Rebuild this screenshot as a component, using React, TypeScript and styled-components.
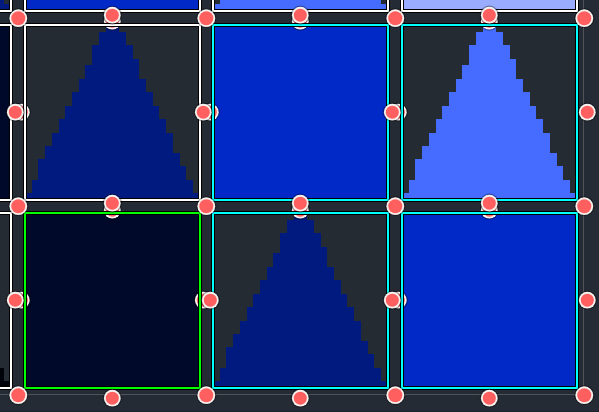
import React from "react";
import styled, { createGlobalStyle } from "styled-components";

const GlobalStyle = createGlobalStyle`
  body {
    margin: 0;
    background: #252b35;
    font-family: "Liberation Sans", sans-serif;
  }
`;

type Shape = "solid" | "cone";
type Side = "top" | "right" | "bottom" | "left";
type Corner = "topLeft" | "topRight" | "bottomLeft" | "bottomRight";
type Anchor = Side | Corner;

interface TileData {
  shape: Shape;
  color: string;
  outline: string;
  active?: boolean;
}

const WHITE = "#ffffff";
const CYAN = "#00ffff";
const GREEN = "#00ff00";

const ROWS: TileData[][] = [
  [
    { shape: "cone", color: "#001a80", outline: WHITE },
    { shape: "solid", color: "#0029c7", outline: WHITE },
    { shape: "cone", color: "#466cff", outline: WHITE },
    { shape: "solid", color: "#99acff", outline: WHITE },
  ],
  [
    { shape: "solid", color: "#000929", outline: WHITE },
    { shape: "cone", color: "#001a80", outline: WHITE },
    { shape: "solid", color: "#0029c7", outline: CYAN },
    { shape: "cone", color: "#466cff", outline: CYAN },
  ],
  [
    { shape: "cone", color: "#00020a", outline: WHITE },
    { shape: "solid", color: "#000929", outline: GREEN, active: true },
    { shape: "cone", color: "#001a80", outline: CYAN },
    { shape: "solid", color: "#0029c7", outline: CYAN },
  ],
];

/* Stepped slopes of the cone, as [x, y at which the step starts]. */
const LEFT_STEPS = [
  [83, 0], [76, 9], [69, 22], [62, 42], [56, 56], [49, 69], [42, 83],
  [36, 96], [29, 110], [22, 123], [15, 136], [9, 157], [4, 170],
];
const RIGHT_STEPS = [
  [96, 0], [103, 9], [110, 22], [116, 36], [123, 56], [130, 69], [136, 83],
  [143, 96], [150, 110], [157, 130], [163, 143], [170, 157], [176, 170],
];

const CONE_PATH =
  "M83 0 H96 " +
  RIGHT_STEPS.slice(1).map(([x, y]) => `V${y} H${x}`).join(" ") +
  " V179 H4 " +
  LEFT_STEPS.slice(1)
    .map((step, i) => `V${step[1]} H${LEFT_STEPS[i][0]}`)
    .reverse()
    .join(" ") +
  " Z";

const Workspace = styled.main`
  box-sizing: border-box;
  display: flow-root;
  height: 100vh;
  overflow: hidden;
  background: #252b35;
  border-bottom: 1px solid #1e222b;
`;

/* The board is scrolled so that its first row and column are partly hidden. */
const Board = styled.section`
  display: grid;
  grid-template-columns: 189px 188px 189px 179px;
  grid-template-rows: 189px 188px 179px;
  width: max-content;
  margin: -166px 0 0 -166px;
  padding: 0 4px 4px 0;
  border-right: 1px solid #505459;
  border-bottom: 1px solid #505459;
`;

const Tile = styled.div<{ $outline: string }>`
  position: relative;
  width: 179px;
  height: 179px;
  background: #252b33;

  &::after {
    content: "";
    position: absolute;
    inset: 0;
    z-index: 2;
    border: 1px solid #000;
    box-shadow: inset 0 0 0 2px ${(p) => p.$outline}, inset 0 0 0 3px #000;
    pointer-events: none;
  }
`;

const SolidFill = styled.div<{ $color: string }>`
  height: 100%;
  background: ${(p) => p.$color};
`;

const ConeArt = styled.svg`
  display: block;
  width: 100%;
  height: 100%;
`;

const PLACE: Record<Anchor, string> = {
  top: "left: 89px; top: -8px;",
  bottom: "left: 89px; top: calc(100% + 8px);",
  left: "left: -8px; top: 89px;",
  right: "left: calc(100% + 8px); top: 89px;",
  topLeft: "left: -5px; top: -5px;",
  topRight: "left: calc(100% + 5px); top: -5px;",
  bottomLeft: "left: -5px; top: calc(100% + 5px);",
  bottomRight: "left: calc(100% + 5px); top: calc(100% + 5px);",
};

const HandleButton = styled.button<{ $at: Anchor; $front: boolean }>`
  position: absolute;
  ${(p) => PLACE[p.$at]}
  z-index: ${(p) => (p.$front ? 3 : 1)};
  width: 22px;
  height: 22px;
  margin: -11px 0 0 -11px;
  padding: 0;
  border: 0;
  background: none;
  cursor: pointer;
`;

const Dot = styled.svg`
  display: block;
`;

const isCorner = (at: Anchor): at is Corner => at.length > 6;

function Handle({ at, front }: { at: Anchor; front: boolean }) {
  const ring = isCorner(at) ? 8.9 : 8.4;
  return (
    <HandleButton type="button" aria-label={`${at} handle`} $at={at} $front={front}>
      <Dot width="22" height="22" viewBox="0 0 22 22" aria-hidden="true">
        <circle cx="11.3" cy="11.2" r={ring + 1.2} fill="#000" fillOpacity="0.35" />
        <circle cx="11.3" cy="11.2" r={ring} fill="#f6f0ee" />
        <circle cx="11.3" cy="11.2" r={ring - 1.9} fill="#ff5f5f" />
      </Dot>
    </HandleButton>
  );
}

interface BoardTileProps {
  tile: TileData;
  afterActive: boolean;
  lastColumn: boolean;
  lastRow: boolean;
}

function BoardTile({ tile, afterActive, lastColumn, lastRow }: BoardTileProps) {
  return (
    <Tile $outline={tile.outline}>
      {tile.shape === "solid" ? (
        <SolidFill $color={tile.color} />
      ) : (
        <ConeArt viewBox="0 0 179 179" shapeRendering="crispEdges" aria-hidden="true">
          <path d={CONE_PATH} fill={tile.color} />
        </ConeArt>
      )}
      <Handle at="right" front={lastColumn || !!tile.active} />
      <Handle at="bottom" front={lastRow} />
      <Handle at="top" front />
      <Handle at="left" front={!afterActive} />
      <Handle at="topLeft" front />
      {lastColumn && <Handle at="topRight" front />}
      {lastRow && <Handle at="bottomLeft" front />}
      {lastColumn && lastRow && <Handle at="bottomRight" front />}
    </Tile>
  );
}

export default function App() {
  return (
    <>
      <GlobalStyle />
      <Workspace>
        <Board aria-label="Tile board">
          {ROWS.map((row, r) =>
            row.map((tile, c) => (
              <BoardTile
                key={`${r}-${c}`}
                tile={tile}
                afterActive={!!row[c - 1]?.active}
                lastColumn={c === row.length - 1}
                lastRow={r === ROWS.length - 1}
              />
            ))
          )}
        </Board>
      </Workspace>
    </>
  );
}
